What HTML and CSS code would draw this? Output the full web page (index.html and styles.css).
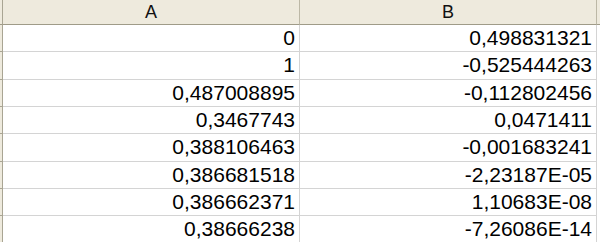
FILE: index.html
```html
<!DOCTYPE html>
<html>
<head>
<meta charset="utf-8">
<link rel="stylesheet" href="styles.css">
</head>
<body>
<div class="sheet">
  <div class="corner"></div><div class="colhead">A</div><div class="colhead">B</div><div class="tail head-tail"></div>
  <div class="rowhead"></div><div class="cell">0</div><div class="cell">0,498831321</div><div class="tail"></div>
  <div class="rowhead"></div><div class="cell">1</div><div class="cell">-0,525444263</div><div class="tail"></div>
  <div class="rowhead"></div><div class="cell">0,487008895</div><div class="cell">-0,112802456</div><div class="tail"></div>
  <div class="rowhead"></div><div class="cell">0,3467743</div><div class="cell">0,0471411</div><div class="tail"></div>
  <div class="rowhead"></div><div class="cell">0,388106463</div><div class="cell">-0,001683241</div><div class="tail"></div>
  <div class="rowhead"></div><div class="cell">0,386681518</div><div class="cell">-2,23187E-05</div><div class="tail"></div>
  <div class="rowhead"></div><div class="cell">0,386662371</div><div class="cell">1,10683E-08</div><div class="tail"></div>
  <div class="rowhead"></div><div class="cell">0,38666238</div><div class="cell">-7,26086E-14</div><div class="tail"></div>
</div>
</body>
</html>
```
FILE: styles.css
```css
html, body {
  margin: 0;
  padding: 0;
  background: #ffffff;
}
.sheet {
  width: 600px;
  height: 242px;
  overflow: hidden;
  display: grid;
  grid-template-columns: 3px 297px 297px 3px;
  grid-template-rows: 25px repeat(8, 27.33px);
  font-family: "Liberation Sans", Arial, sans-serif;
  color: #000;
}
.corner, .colhead, .head-tail {
  background: #eeeadd;
  border-bottom: 1px solid #9f9b88;
  box-sizing: border-box;
}
.corner {
  border-right: 1px solid #a9a593;
}
.colhead {
  border-right: 1px solid #bcb8a6;
  font-size: 18px;
  line-height: 25px;
  text-align: center;
  color: #111;
}
.rowhead {
  background: #eeeadd;
  border-right: 1px solid #a9a593;
  border-bottom: 1px solid #a9a593;
  box-sizing: border-box;
}
.cell {
  box-sizing: border-box;
  border-right: 1px solid #d4d4d4;
  border-bottom: 1px solid #d4d4d4;
  font-size: 21px;
  line-height: 26px;
  text-align: right;
  padding-right: 4px;
  white-space: nowrap;
}
.tail {
  box-sizing: border-box;
}
```
